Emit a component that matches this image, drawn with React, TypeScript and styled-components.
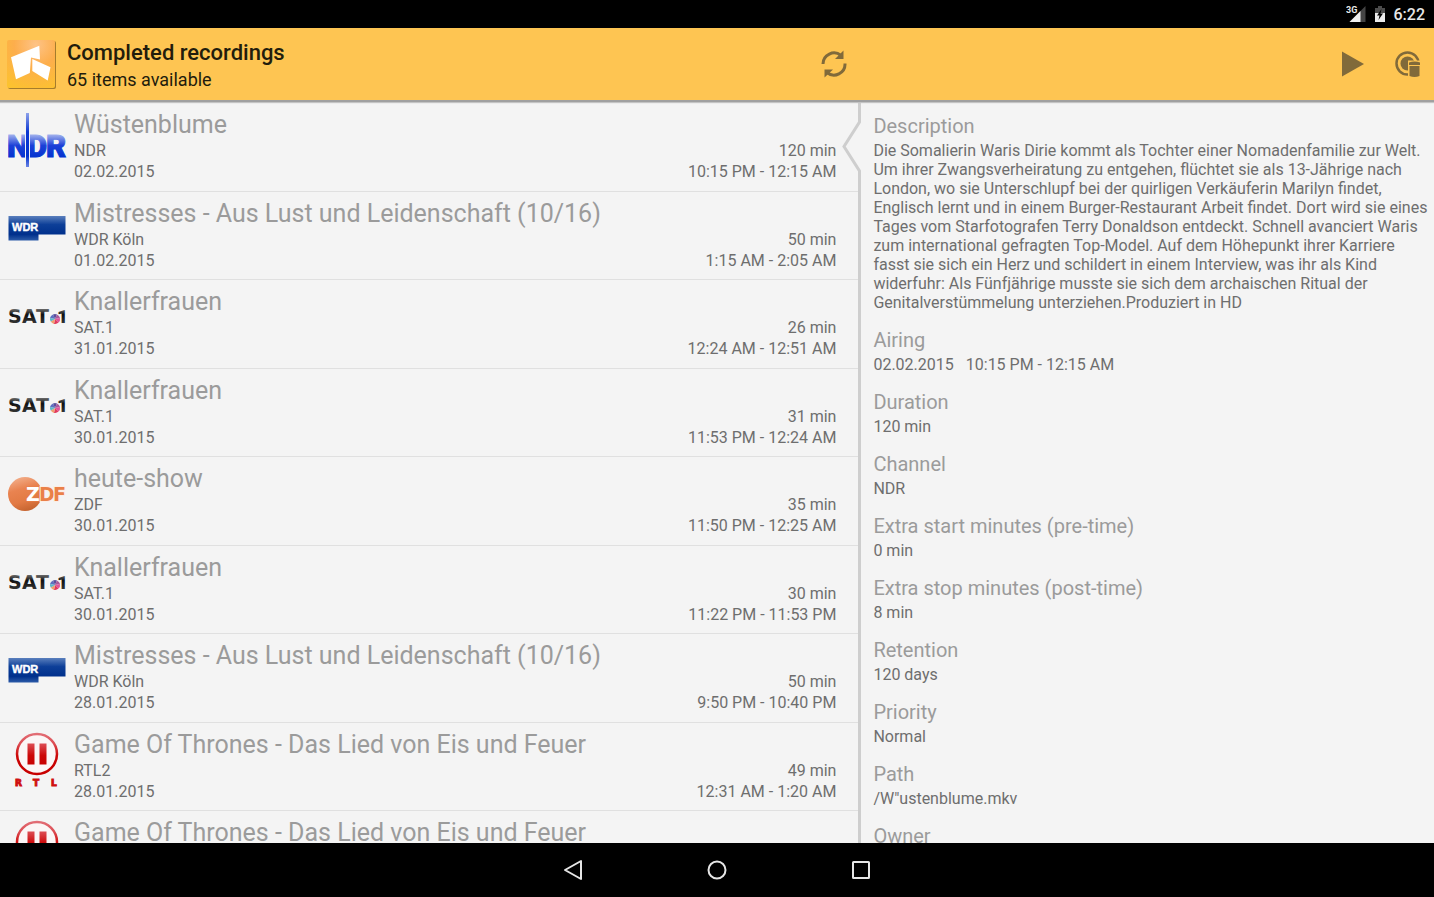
import React from "react";
import styled, { createGlobalStyle } from "styled-components";

const GlobalStyle = createGlobalStyle`
  *, *::before, *::after { box-sizing: border-box; }
  html, body, #root { height: 100%; }
  body {
    margin: 0;
    background: #000;
    font-family: Roboto, "Noto Sans", sans-serif;
    font-size: 16px;
    color: #6e6e6e;
  }
  h1, h2, p, ul, dl, dt, dd { margin: 0; padding: 0; font-weight: 400; }
  ul { list-style: none; }
  button {
    margin: 0;
    padding: 0;
    border: 0;
    background: none;
    color: inherit;
    font: inherit;
    cursor: pointer;
  }
  svg { display: block; }
`;

const Screen = styled.div`
  display: flex;
  flex-direction: column;
  height: 100vh;
  overflow: hidden;
`;

const StatusBar = styled.div`
  display: flex;
  flex: none;
  align-items: center;
  justify-content: flex-end;
  gap: 8px;
  height: 28px;
  padding-right: 9px;
  background: #000;
  color: #e8e8e8;
  font-size: 16px;
  font-weight: 500;
`;

const Header = styled.header`
  position: relative;
  z-index: 2;
  display: flex;
  flex: none;
  height: 72px;
  background: #fec552;
  color: #221c0c;
  box-shadow: 0 2px 0 #a0a0a0, 0 3px 1px #c4c4c4;
`;

const HeaderMain = styled.div`
  display: flex;
  align-items: center;
  width: 60%;
  padding: 0 13px 0 7px;
`;

const Titles = styled.div`
  flex: 1;
  padding: 4px 0 0 11px;
`;

const PageTitle = styled.h1`
  && { font-weight: 500; }
  font-size: 22px;
  line-height: 28px;
`;

const PageSubtitle = styled.p`
  font-size: 18px;
  line-height: 26px;
`;

const Actions = styled.div`
  display: flex;
  flex: 1;
  align-items: center;
  justify-content: flex-end;
  gap: 31px;
  padding-right: 12px;
`;

const IconButton = styled.button`
  display: block;
  color: #816a3a;
`;

const Content = styled.main`
  display: flex;
  flex: 1;
  min-height: 0;
  background: #f4f4f4;
`;

const RecordingList = styled.ul`
  width: 60%;
  padding-top: 2px;
  overflow: hidden;
`;

const Row = styled.li`
  height: 89px;
  border-top: 1px solid #e0e0e0;

  &:nth-child(even) { height: 88px; }
  &:first-child { border-top-color: transparent; }
`;

const RowButton = styled.button`
  display: flex;
  gap: 8px;
  width: 100%;
  padding: 6px 24px 0 8px;
  text-align: left;
`;

const LogoBox = styled.span`
  flex: none;
  width: 58px;
  padding-top: 2px;
`;

const RowText = styled.span`
  display: block;
  flex: 1;
  min-width: 0;
  line-height: 21px;
`;

const RowTitle = styled.span`
  display: block;
  overflow: hidden;
  color: #9b9b9b;
  font-size: 25px;
  line-height: 31px;
  white-space: nowrap;
  text-overflow: ellipsis;
`;

const RowLine = styled.span`
  display: flex;
  justify-content: space-between;
`;

const Details = styled.section`
  position: relative;
  flex: 1;
  min-width: 0;
`;

const DetailList = styled.dl`
  height: 100%;
  padding: 14px 4px 0 13px;
  overflow: hidden;
`;

const Divider = styled.div`
  position: absolute;
  top: 0;
  bottom: 0;
  left: -19px;
  display: flex;
  flex-direction: column;
  width: 20px;
  pointer-events: none;
`;

const DividerLine = styled.div`
  flex: 1;
  align-self: flex-end;
  width: 3px;
  background: #cecece;
`;

const Detail = styled.div`
  padding-bottom: 16px;
`;

const DetailName = styled.dt`
  margin-bottom: 3px;
  color: #9b9b9b;
  font-size: 20px;
  line-height: 24px;
`;

const DetailValue = styled.dd`
  line-height: 19px;
`;

const Time = styled.span`
  margin-left: 12px;
`;

const NavBar = styled.nav`
  display: flex;
  flex: none;
  justify-content: center;
  height: 54px;
  background: #000;
`;

const NavButton = styled.button`
  display: flex;
  align-items: center;
  justify-content: center;
  width: 144px;
  color: #e6e6e6;
`;

const AppIcon = () => (
  <svg width="49" height="49" viewBox="0 0 49 49" aria-hidden="true">
    <defs>
      <radialGradient id="app" cx="0.6" cy="0.1" r="1">
        <stop offset="0" stopColor="#fec386" />
        <stop offset="0.45" stopColor="#fdae4c" />
        <stop offset="1" stopColor="#fcc22f" />
      </radialGradient>
    </defs>
    <rect x="1" y="1" width="48" height="48" rx="2" fill="#a57c2c" />
    <rect width="48" height="48" rx="2" fill="url(#app)" />
    <path d="M4 17.300L32.300 5.700L33 19.500L24 17.500L22.800 33L9 39.300Z" fill="#fff" />
    <path d="M25.300 19L43.500 27.300L40.700 40.500L25.300 31Z" fill="#fff" />
  </svg>
);

const NdrLogo = () => (
  <svg width="60" height="58" viewBox="0 0 60 58" aria-hidden="true">
    <defs>
      <linearGradient id="ndr" gradientUnits="userSpaceOnUse" x1="0" y1="23" x2="0" y2="46">
        <stop offset="0" stopColor="#a9b8ee" />
        <stop offset="0.5" stopColor="#1c40d8" />
        <stop offset="1" stopColor="#0433d0" />
      </linearGradient>
      <linearGradient id="ndrLine" gradientUnits="userSpaceOnUse" x1="0" y1="2" x2="0" y2="56">
        <stop offset="0" stopColor="#8ea2ea" />
        <stop offset="0.35" stopColor="#0b36d2" />
        <stop offset="0.8" stopColor="#0433d0" />
        <stop offset="1" stopColor="#6a84e4" />
      </linearGradient>
    </defs>
    <text x="-1 19 38" y="46" fontFamily="Roboto" fontWeight="900" fontSize="31" fill="url(#ndr)" stroke="url(#ndr)" strokeWidth="1">NDR</text>
    <rect x="17" y="2" width="5" height="54" fill="#f4f4f4" />
    <rect x="18" y="2" width="3" height="54" fill="url(#ndrLine)" />
  </svg>
);

const WdrLogo = () => (
  <svg width="58" height="58" viewBox="0 0 58 58" aria-hidden="true">
    <defs>
      <linearGradient id="wdr" x1="0" y1="0" x2="0" y2="1">
        <stop offset="0" stopColor="#5a7fbd" />
        <stop offset="0.35" stopColor="#0d3f98" />
        <stop offset="0.75" stopColor="#00308c" />
        <stop offset="1" stopColor="#2c5ba8" />
      </linearGradient>
    </defs>
    <path d="M0.500 16H57.500V34.500H30.500V40.500H0.500Z" fill="url(#wdr)" />
    <text x="4" y="31" fontFamily="Liberation Sans" fontWeight="700" fontSize="11" fill="#fff" stroke="#fff" strokeWidth="0.400">WDR</text>
  </svg>
);

const SatLogo = () => (
  <svg width="62" height="58" viewBox="0 0 62 58" aria-hidden="true">
    <defs>
      <linearGradient id="sat" gradientUnits="userSpaceOnUse" x1="0" y1="21" x2="0" y2="35">
        <stop offset="0" stopColor="#6a6a6a" />
        <stop offset="0.4" stopColor="#111" />
        <stop offset="1" stopColor="#333" />
      </linearGradient>
    </defs>
    <text x="0 14 28" y="35" fontFamily="DejaVu Sans" fontWeight="700" fontSize="19" fill="url(#sat)">SAT</text>
    <text x="49" y="35" fontFamily="Roboto" fontWeight="900" fontSize="19" fill="url(#sat)">1</text>
    <circle cx="47" cy="31" r="6" fill="#f4f4f4" />
    <g transform="translate(47 31)">
      <path d="M0 0L-5 -1A5 5 0 0 1 -2 -4.600Z" fill="#5f6fc0" />
      <path d="M0 0L-2 -4.600A5 5 0 0 1 2 -4.600Z" fill="#5a4f9c" />
      <path d="M0 0L2 -4.600A5 5 0 0 1 5 -1Z" fill="#a85a9a" />
      <path d="M0 0L5 -1A5 5 0 0 1 3.500 3.600Z" fill="#e0559a" />
      <path d="M0 0L3.500 3.600A5 5 0 0 1 -1 4.900Z" fill="#e23a5c" />
      <path d="M0 0L-1 4.900A5 5 0 0 1 -4.300 2.600Z" fill="#f0a070" />
      <path d="M0 0L-4.300 2.600A5 5 0 0 1 -5 -1Z" fill="#5fb7c8" />
    </g>
  </svg>
);

const ZdfLogo = () => (
  <svg width="60" height="58" viewBox="0 0 60 58" aria-hidden="true">
    <defs>
      <linearGradient id="zdf" x1="0.3" y1="0" x2="0.6" y2="1">
        <stop offset="0" stopColor="#f2ae8a" />
        <stop offset="0.35" stopColor="#e98350" />
        <stop offset="0.7" stopColor="#e27a44" />
        <stop offset="1" stopColor="#c4632f" />
      </linearGradient>
    </defs>
    <circle cx="17" cy="29" r="17" fill="url(#zdf)" />
    <text x="18 31 45" y="36" fontFamily="DejaVu Sans" fontWeight="700" fontSize="19" fill="#ea8048" stroke="#fbeee6" strokeWidth="2" paintOrder="stroke">
      <tspan fill="#fff" stroke="#ea8048" strokeWidth="1">Z</tspan>DF
    </text>
  </svg>
);

const RtlLogo = () => (
  <svg width="58" height="58" viewBox="0 0 58 58" aria-hidden="true">
    <defs>
      <linearGradient id="rtl" gradientUnits="userSpaceOnUse" x1="0" y1="2" x2="0" y2="34">
        <stop offset="0" stopColor="#e27078" />
        <stop offset="0.35" stopColor="#dc4a50" />
        <stop offset="0.7" stopColor="#cc0808" />
        <stop offset="1" stopColor="#c80000" />
      </linearGradient>
    </defs>
    <circle cx="29" cy="23" r="20" fill="#fbf6f6" stroke="url(#rtl)" strokeWidth="2.500" />
    <rect x="19.500" y="12.500" width="7" height="21" fill="url(#rtl)" />
    <rect x="31.500" y="12.500" width="7" height="21" fill="url(#rtl)" />
    <text x="7 25 43" y="55" fontFamily="DejaVu Sans" fontWeight="700" fontSize="9" fill="#cf1010" stroke="#cf1010" strokeWidth="1">RTL</text>
  </svg>
);

const logos = { ndr: NdrLogo, wdr: WdrLogo, sat: SatLogo, zdf: ZdfLogo, rtl: RtlLogo };

type Recording = {
  logo: keyof typeof logos;
  title: string;
  channel: string;
  date: string;
  duration: string;
  time: string;
};

const recordings: Recording[] = [
  { logo: "ndr", title: "Wüstenblume", channel: "NDR", date: "02.02.2015", duration: "120 min", time: "10:15 PM - 12:15 AM" },
  { logo: "wdr", title: "Mistresses - Aus Lust und Leidenschaft (10/16)", channel: "WDR Köln", date: "01.02.2015", duration: "50 min", time: "1:15 AM - 2:05 AM" },
  { logo: "sat", title: "Knallerfrauen", channel: "SAT.1", date: "31.01.2015", duration: "26 min", time: "12:24 AM - 12:51 AM" },
  { logo: "sat", title: "Knallerfrauen", channel: "SAT.1", date: "30.01.2015", duration: "31 min", time: "11:53 PM - 12:24 AM" },
  { logo: "zdf", title: "heute-show", channel: "ZDF", date: "30.01.2015", duration: "35 min", time: "11:50 PM - 12:25 AM" },
  { logo: "sat", title: "Knallerfrauen", channel: "SAT.1", date: "30.01.2015", duration: "30 min", time: "11:22 PM - 11:53 PM" },
  { logo: "wdr", title: "Mistresses - Aus Lust und Leidenschaft (10/16)", channel: "WDR Köln", date: "28.01.2015", duration: "50 min", time: "9:50 PM - 10:40 PM" },
  { logo: "rtl", title: "Game Of Thrones - Das Lied von Eis und Feuer", channel: "RTL2", date: "28.01.2015", duration: "49 min", time: "12:31 AM - 1:20 AM" },
  { logo: "rtl", title: "Game Of Thrones - Das Lied von Eis und Feuer", channel: "", date: "", duration: "", time: "" },
];

const details: { name: string; value: React.ReactNode }[] = [
  {
    name: "Description",
    value:
      "Die Somalierin Waris Dirie kommt als Tochter einer Nomadenfamilie zur Welt. Um ihrer Zwangsverheiratung zu entgehen, flüchtet sie als 13-Jährige nach London, wo sie Unterschlupf bei der quirligen Verkäuferin Marilyn findet, Englisch lernt und in einem Burger-Restaurant Arbeit findet. Dort wird sie eines Tages vom Starfotografen Terry Donaldson entdeckt. Schnell avanciert Waris zum international gefragten Top-Model. Auf dem Höhepunkt ihrer Karriere fasst sie sich ein Herz und schildert in einem Interview, was ihr als Kind widerfuhr: Als Fünfjährige musste sie sich dem archaischen Ritual der Genitalverstümmelung unterziehen.Produziert in HD",
  },
  { name: "Airing", value: <>02.02.2015<Time>10:15 PM - 12:15 AM</Time></> },
  { name: "Duration", value: "120 min" },
  { name: "Channel", value: "NDR" },
  { name: "Extra start minutes (pre-time)", value: "0 min" },
  { name: "Extra stop minutes (post-time)", value: "8 min" },
  { name: "Retention", value: "120 days" },
  { name: "Priority", value: "Normal" },
  { name: "Path", value: '/W"ustenblume.mkv' },
  { name: "Owner", value: "" },
];

export default function App() {
  return (
    <Screen>
      <GlobalStyle />
      <StatusBar>
        <svg width="20" height="18" viewBox="0 0 20 18" aria-hidden="true">
          <path d="M19.500 1V17H3.500Z" fill="#444" />
          <path d="M14.500 6V17H3.500Z" fill="#f0f0f0" />
          <text x="0" y="8" fontFamily="Roboto" fontWeight="700" fontSize="9" fill="#e8e8e8">3G</text>
        </svg>
        <svg width="12" height="18" viewBox="0 0 12 18" aria-hidden="true">
          <path d="M4 1H8V3H11V9H1V3H4Z" fill="#4c4c4c" />
          <path d="M1 8H11V17H1Z" fill="#ececec" />
          <path d="M7.500 4L3 10.500H5.500L4.500 15L9 8.500H6.500Z" fill="#000" />
        </svg>
        <span>6:22</span>
      </StatusBar>

      <Header>
        <HeaderMain>
          <AppIcon />
          <Titles>
            <PageTitle>Completed recordings</PageTitle>
            <PageSubtitle>65 items available</PageSubtitle>
          </Titles>
          <IconButton aria-label="Refresh">
            <svg width="26" height="28" viewBox="0 0 26 28" aria-hidden="true">
              <g fill="none" stroke="currentColor" strokeWidth="3">
                <path d="M2 14A11 11 0 0 1 20 5.500" />
                <path d="M24 13.500A11 11 0 0 1 6 22.500" />
              </g>
              <path d="M22.500 0.500V9H14Z" fill="currentColor" />
              <path d="M3.500 27.500V19.500H12Z" fill="currentColor" />
            </svg>
          </IconButton>
        </HeaderMain>
        <Actions>
          <IconButton aria-label="Play">
            <svg width="22" height="26" viewBox="0 0 22 26" aria-hidden="true">
              <path d="M0 0.500L22 13L0 25.500Z" fill="currentColor" />
            </svg>
          </IconButton>
          <IconButton aria-label="Delete recording">
            <svg width="27" height="26" viewBox="0 0 27 26" aria-hidden="true">
              <circle cx="12.500" cy="12.500" r="11" fill="none" stroke="currentColor" strokeWidth="2.500" />
              <circle cx="12.500" cy="12.500" r="7" fill="currentColor" />
              <path d="M13 9.500H27V26H13Z" fill="#fec552" />
              <path d="M14 11.500Q19.500 9.500 25 11.500V14H14Z" fill="currentColor" />
              <path d="M14.500 15H24.500V25Q19.500 27 14.500 25Z" fill="currentColor" />
            </svg>
          </IconButton>
        </Actions>
      </Header>

      <Content>
        <RecordingList>
          {recordings.map((r, i) => {
            const Logo = logos[r.logo];
            return (
              <Row key={i}>
                <RowButton>
                  <LogoBox><Logo /></LogoBox>
                  <RowText>
                    <RowTitle>{r.title}</RowTitle>
                    <RowLine><span>{r.channel}</span><span>{r.duration}</span></RowLine>
                    <RowLine><span>{r.date}</span><span>{r.time}</span></RowLine>
                  </RowText>
                </RowButton>
              </Row>
            );
          })}
        </RecordingList>
        <Details>
          <Divider>
            <svg width="20" height="74" viewBox="0 0 20 74" aria-hidden="true">
              <path d="M20 0H18V22L3 46.500L18 71V74H20Z" fill="#f4f4f4" />
              <path d="M18.500 0V22L3 46.500L18.500 71V74" fill="none" stroke="#cecece" strokeWidth="3" />
            </svg>
            <DividerLine />
          </Divider>
          <DetailList>
            {details.map((d) => (
              <Detail key={d.name}>
                <DetailName>{d.name}</DetailName>
                <DetailValue>{d.value}</DetailValue>
              </Detail>
            ))}
          </DetailList>
        </Details>
      </Content>

      <NavBar>
        <NavButton aria-label="Back">
          <svg width="20" height="22" viewBox="0 0 20 22" aria-hidden="true">
            <path d="M18 2V20L2 11Z" fill="none" stroke="currentColor" strokeWidth="2" strokeLinejoin="round" />
          </svg>
        </NavButton>
        <NavButton aria-label="Home">
          <svg width="20" height="20" viewBox="0 0 20 20" aria-hidden="true">
            <circle cx="10" cy="10" r="8.500" fill="none" stroke="currentColor" strokeWidth="2" />
          </svg>
        </NavButton>
        <NavButton aria-label="Recent apps">
          <svg width="18" height="18" viewBox="0 0 18 18" aria-hidden="true">
            <rect x="1" y="1" width="16" height="16" rx="0.500" fill="none" stroke="currentColor" strokeWidth="2" />
          </svg>
        </NavButton>
      </NavBar>
    </Screen>
  );
}
